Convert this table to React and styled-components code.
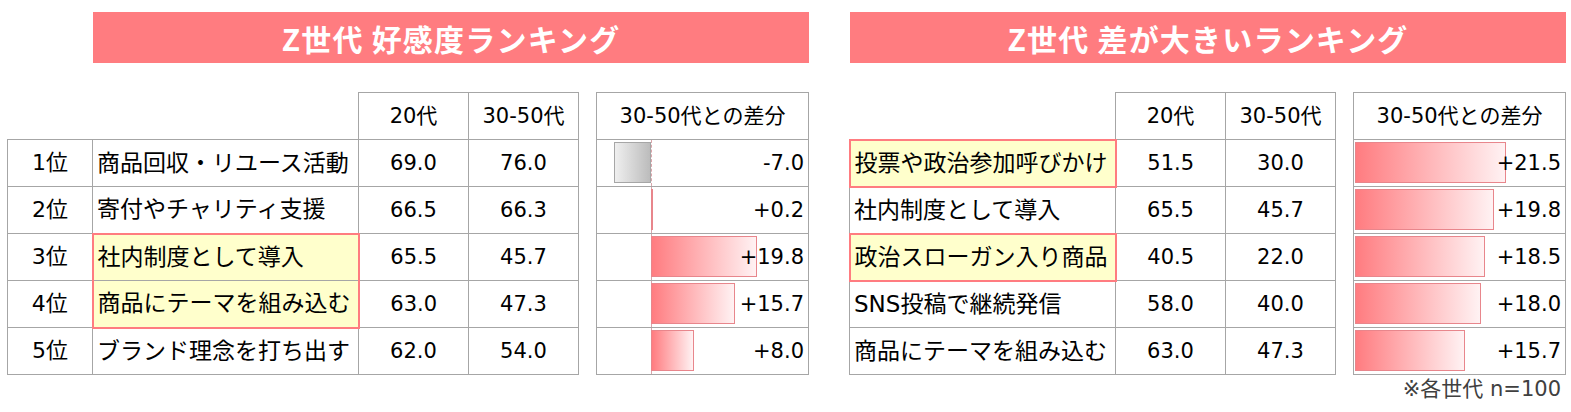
import React from "react";
import styled, { createGlobalStyle } from "styled-components";

const GlobalStyle = createGlobalStyle`
  html, body {
    margin: 0;
    padding: 0;
    background: #fff;
  }
  body {
    font-family: "DejaVu Sans", "Noto Sans CJK JP", sans-serif;
    color: #000;
  }
`;

const GRID = "#a6a6a6";
const PINK = "#ff7c80";

const Page = styled.div`
  display: flex;
  align-items: flex-start;
  gap: 39px;
  padding: 12px 0 0 8px;
  width: 1571px;
  height: 412px;
  box-sizing: border-box;
`;

const Section = styled.section`
  display: flex;
  flex-direction: column;
  align-items: flex-end;
  width: ${(p) => p.$width}px;
`;

const Banner = styled.h2`
  margin: 0;
  width: 716px;
  height: 51px;
  background: ${PINK};
  color: #fff;
  font-family: "Noto Sans CJK JP", sans-serif;
  font-size: 30px;
  font-weight: 700;
  letter-spacing: 1.2px;
  display: flex;
  align-items: center;
  justify-content: center;
`;

const Tables = styled.div`
  display: flex;
  align-items: flex-start;
  gap: 17px;
  margin-top: 29px;
`;

const Table = styled.table`
  border-collapse: collapse;
  table-layout: fixed;
  font-size: 21px;
  line-height: 1;

  tr {
    height: 47px;
  }
`;

const Head = styled.th`
  font-weight: 400;
  border: ${(p) => (p.$blank ? "none" : `1px solid ${GRID}`)};
  text-align: center;
  padding: 0;
`;

const Cell = styled.td`
  border: 1px solid ${GRID};
  padding: 0 ${(p) => (p.$left ? "4px" : "0")};
  font-size: ${(p) => p.$size || 21}px;
  text-align: ${(p) => (p.$left ? "left" : "center")};
  white-space: nowrap;
  background: ${(p) => (p.$mark ? "#ffffcc" : "#fff")};
  ${(p) =>
    p.$mark &&
    `
    border-left: 2px solid ${PINK};
    border-right: 2px solid ${PINK};
    border-top: ${p.$joinTop ? `1px solid ${GRID}` : `2px solid ${PINK}`};
    border-bottom: ${p.$joinBottom ? `1px solid ${GRID}` : `2px solid ${PINK}`};
  `}
`;

const DiffCell = styled.td`
  border: 1px solid ${GRID};
  padding: 0;
`;

const DiffInner = styled.div`
  display: grid;
  grid-template: 46px / 1fr;
`;

const Axis = styled.div`
  grid-area: 1 / 1;
  width: 0;
  margin-left: ${(p) => p.$at}px;
  border-left: 1px dashed #d9a6ab;
`;

const Bar = styled.div`
  grid-area: 1 / 1;
  box-sizing: border-box;
  margin: 2px 0 3px;
  border: 1px solid ${(p) => (p.$neg ? "#a6a6a6" : "#e8868c")};
  background: ${(p) =>
    p.$neg
      ? "linear-gradient(to right, #efefef, #bcbcbc)"
      : "linear-gradient(to right, #ff7c80, #fff2f3)"};
`;

const Value = styled.span`
  grid-area: 1 / 1;
  justify-self: end;
  align-self: center;
  padding-right: 4px;
`;

const Note = styled.p`
  margin: 1px 0 0;
  padding-right: 5px;
  font-size: 21px;
  line-height: 26px;
  color: #404040;
`;

const fmt = (v) => (v > 0 ? `+${v.toFixed(1)}` : v.toFixed(1));

function DiffBar({ value, axis, scale, dashed }) {
  const w = Math.max(1, Math.abs(value) * scale);
  const left = value < 0 ? axis - w : axis;
  return (
    <DiffCell>
      <DiffInner>
        {dashed && <Axis $at={axis} />}
        <Bar $neg={value < 0} style={{ marginLeft: left, width: w }} />
        <Value>{fmt(value)}</Value>
      </DiffInner>
    </DiffCell>
  );
}

function Ranking({ title, rows, ranked, axis, scale, dashed, note, width }) {
  return (
    <Section $width={width}>
      <Banner>{title}</Banner>
      <Tables>
        <Table style={{ width: (ranked ? 85 : 0) + 486 }}>
          <colgroup>
            {ranked && <col style={{ width: 85 }} />}
            <col style={{ width: 266 }} />
            <col style={{ width: 110 }} />
            <col style={{ width: 110 }} />
          </colgroup>
          <thead>
            <tr>
              {ranked && <Head $blank />}
              <Head $blank />
              <Head>20代</Head>
              <Head>30-50代</Head>
            </tr>
          </thead>
          <tbody>
            {rows.map((r, i) => (
              <tr key={r.name}>
                {ranked && <Cell $size={22}>{i + 1}位</Cell>}
                <Cell
                  $left
                  $size={23}
                  $mark={r.mark}
                  $joinTop={r.mark && rows[i - 1]?.mark}
                  $joinBottom={r.mark && rows[i + 1]?.mark}
                >
                  {r.name}
                </Cell>
                <Cell>{r.a.toFixed(1)}</Cell>
                <Cell>{r.b.toFixed(1)}</Cell>
              </tr>
            ))}
          </tbody>
        </Table>
        <Table style={{ width: 213 }}>
          <thead>
            <tr>
              <Head>30-50代との差分</Head>
            </tr>
          </thead>
          <tbody>
            {rows.map((r) => (
              <tr key={r.name}>
                <DiffBar
                  value={Math.round((r.a - r.b) * 10) / 10}
                  axis={axis}
                  scale={scale}
                  dashed={dashed}
                />
              </tr>
            ))}
          </tbody>
        </Table>
      </Tables>
      {note && <Note>{note}</Note>}
    </Section>
  );
}

const favorites = [
  { name: "商品回収・リユース活動", a: 69.0, b: 76.0 },
  { name: "寄付やチャリティ支援", a: 66.5, b: 66.3 },
  { name: "社内制度として導入", a: 65.5, b: 45.7, mark: true },
  { name: "商品にテーマを組み込む", a: 63.0, b: 47.3, mark: true },
  { name: "ブランド理念を打ち出す", a: 62.0, b: 54.0 },
];

const gaps = [
  { name: "投票や政治参加呼びかけ", a: 51.5, b: 30.0, mark: true },
  { name: "社内制度として導入", a: 65.5, b: 45.7 },
  { name: "政治スローガン入り商品", a: 40.5, b: 22.0, mark: true },
  { name: "SNS投稿で継続発信", a: 58.0, b: 40.0 },
  { name: "商品にテーマを組み込む", a: 63.0, b: 47.3 },
];

export default function App() {
  return (
    <>
      <GlobalStyle />
      <Page>
        <Ranking
          title="Z世代 好感度ランキング"
          rows={favorites}
          ranked
          axis={54}
          scale={5.35}
          dashed
          width={801}
        />
        <Ranking
          title="Z世代 差が大きいランキング"
          rows={gaps}
          axis={1}
          scale={7}
          note="※各世代 n=100"
          width={718}
        />
      </Page>
    </>
  );
}
